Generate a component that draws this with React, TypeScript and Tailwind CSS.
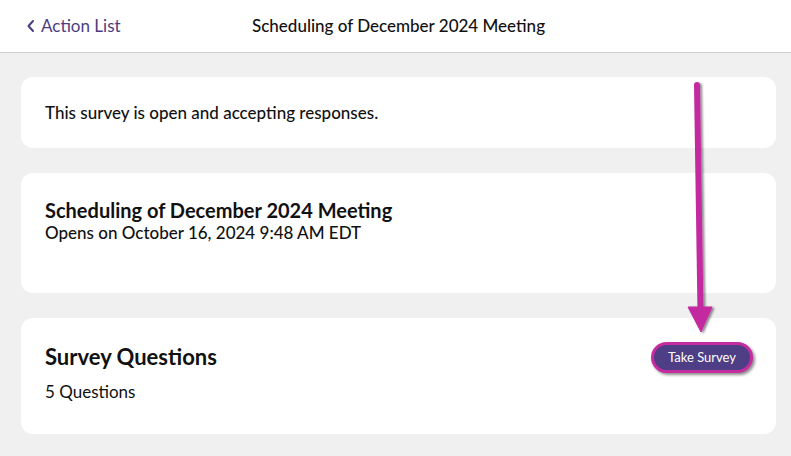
export default function App() {
  return (
    <div className="relative h-[456px] w-[791px] overflow-hidden bg-[#f0f0f0] font-['Lato','Liberation_Sans',sans-serif] text-[#111]">
      {/* Header */}
      <div className="flex h-[53px] items-center border-b border-[#cfcfcf] bg-white">
        <div className="flex w-[200px] items-center pl-[26px] text-[17px] text-[#4b3d80]">
          <svg width="10" height="14" viewBox="0 0 10 14" className="mr-[5px]">
            <path d="M7 2 L2.5 7 L7 12" fill="none" stroke="currentColor" strokeWidth="2" strokeLinecap="round" strokeLinejoin="round" />
          </svg>
          Action List
        </div>
        <div className="flex-1 pr-[194px] text-center text-[17px] font-medium">Scheduling of December 2024 Meeting</div>
      </div>

      {/* Cards */}
      <div className="ml-[21px] mr-[15px] flex flex-col gap-[25px] pt-[24px]">
        <div className="flex h-[71px] items-center rounded-[12px] bg-white px-[24px]">
          <p className="text-[17px] font-medium">This survey is open and accepting responses.</p>
        </div>

        <div className="h-[120px] rounded-[12px] bg-white px-[24px] pt-[25px]">
          <h2 className="text-[20px] font-bold leading-[24px]">Scheduling of December 2024 Meeting</h2>
          <p className="text-[17px] font-medium leading-[22px]">Opens on October 16, 2024 9:48 AM EDT</p>
        </div>

        <div className="flex h-[116px] items-start justify-between rounded-[12px] bg-white pl-[24px] pr-[23px] pt-[24px]">
          <div>
            <h2 className="text-[22px] font-bold leading-[30px]">Survey Questions</h2>
            <p className="mt-[9px] text-[17px] leading-[22px]">5 Questions</p>
          </div>
          <button className="h-[31px] rounded-full border-[3px] border-[#c42ca0] bg-[#4e3e85] px-[14px] text-[13px] text-white shadow-[2px_2px_3px_rgba(0,0,0,0.45)]">
            Take Survey
          </button>
        </div>
      </div>

      {/* Annotation arrow */}
      <svg className="pointer-events-none absolute left-0 top-0" width="791" height="456">
        <defs>
          <filter id="sh" x="-50%" y="-10%" width="200%" height="120%">
            <feDropShadow dx="2" dy="1" stdDeviation="1.2" floodColor="#000" floodOpacity="0.45" />
          </filter>
        </defs>
        <g filter="url(#sh)" fill="#c42ca0" stroke="#c42ca0">
          <line x1="697" y1="85" x2="700.5" y2="312" strokeWidth="6" strokeLinecap="round" />
          <path d="M688 307 L712 307 L701 332 Z" strokeWidth="1" strokeLinejoin="round" />
        </g>
      </svg>
    </div>
  )
}
